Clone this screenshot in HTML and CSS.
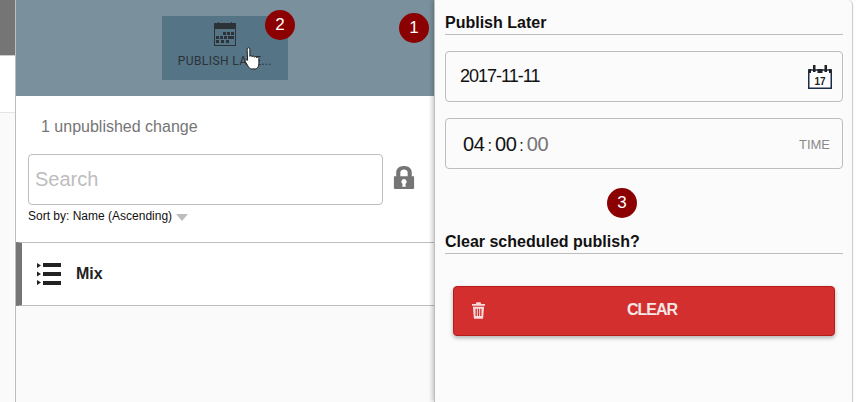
FILE: index.html
```html
<!DOCTYPE html>
<html lang="en">
<head>
  <meta charset="UTF-8">
  <title>Publish Later</title>
  <link rel="stylesheet" href="styles.css">
</head>
<body>

  <div class="page">
    <div class="gutter">
      <div class="gutter-top"></div>
      <div class="gutter-white"></div>
      <div class="gutter-rest"></div>
    </div>

    <div class="main">
      <div class="toolbar">
        <div class="toolbar-btn">
          <svg class="toolbar-icon" width="24" height="24" viewBox="0 0 24 24">
            <path fill="#2b3238" d="M1 1h4v-1h1v1h12v-1h1v1h4v23h-22zM2 7v16h20v-16z"/>
            <g fill="#2b3238">
              <rect x="10" y="10" width="3" height="3"/><rect x="14" y="10" width="3" height="3"/><rect x="18" y="10" width="3" height="3"/>
              <rect x="3" y="14" width="3" height="3"/><rect x="7" y="14" width="3" height="3"/><rect x="11" y="14" width="3" height="3"/><rect x="15" y="14" width="3" height="3"/><rect x="18" y="14" width="3" height="3"/>
              <rect x="3" y="18" width="3" height="3"/><rect x="8" y="18" width="3" height="3"/><rect x="13" y="18" width="3" height="3"/>
            </g>
          </svg>
          <span class="toolbar-label">PUBLISH LATE...</span>
          <svg class="cursor" width="18" height="24" viewBox="0 0 20 26">
            <path fill="#fff" stroke="#111" stroke-width="1" d="M3.500 2c0-2 3-2 3 0v8c0-1 2.500-1 2.500 .5 0-1 2.500-1 2.500 .5 0-1 2.500-1 2.500 .5 0-1 2.500-.5 2.500 1v6c0 3-2 5.500-4 5.500h-4c-2 0-3-1.500-4-3l-3-5c-1-1.500 1-3 2.500-1.500z"/>
          </svg>
        </div>
        <span class="badge badge-two">2</span>
        <span class="badge badge-one">1</span>
      </div>

      <div class="content">
        <div class="changes">1 unpublished change</div>
        <div class="search-row">
          <input class="search" type="text" placeholder="Search">
          <svg class="lock" width="22" height="24" viewBox="0 0 24 26">
            <path fill="#757575" fill-rule="evenodd" d="M3.500 11v-4c0-9.500 17-9.500 17 0v4h2.500v13c0 1-1 1-1 1h-20s-1 0-1-1v-13zM8 11h8v-4c0-4.500-8-4.500-8 0zM12 14a3 3 0 0 0-1.500 5.500l-.5 3h4l-.5-3a3 3 0 0 0-1.500-5.500z"/>
          </svg>
        </div>
        <div class="sort">Sort by: Name (Ascending) <span class="sort-arrow"></span></div>
      </div>

      <div class="item">
        <svg width="24" height="22" viewBox="0 0 24 22">
          <path fill="#222" d="M0 0l4 2.500-4 2.500zM0 8.500l4 2.500-4 2.500zM0 17l4 2.500-4 2.500zM6 0h18v4h-18zM6 9h18v4h-18zM6 18h18v4h-18z"/>
        </svg>
        <span class="item-name">Mix</span>
      </div>
      <div class="main-rest"></div>
    </div>

    <div class="panel">
      <h3 class="panel-title">Publish Later</h3>
      <div class="field field-date">
        <span>2017-11-11</span>
        <svg width="24" height="24" viewBox="0 0 24 24">
          <path fill="#fff" stroke="#1c2b4a" stroke-width="1.500" d="M.75 5h22.500v18.250h-22.500z"/>
          <path fill="#222" d="M1 4h2v4h-2zM5 0h2.500v7h-2.500zM9.500 4h5v4h-5zM16.500 0h2.500v7h-2.500zM21 4h2v4h-2z"/>
          <text class="cal-day" x="12" y="20" text-anchor="middle">17</text>
        </svg>
      </div>
      <div class="field field-time">
        <span class="time"><b>04</b><i>:</i><b>00</b><i>:</i><b class="dim">00</b></span>
        <span class="time-label">TIME</span>
      </div>
      <span class="badge badge-three">3</span>
      <h3 class="panel-title panel-title-clear">Clear scheduled publish?</h3>
      <button class="clear-btn" type="button">
        <svg class="trash" width="13" height="17" viewBox="0 0 14 18">
          <path fill="#f6dcdc" fill-rule="evenodd" d="M5 0h4l1 2h4v2h-14v-2h4zM1 5h12l-1 12c0 .5-.5 1-1 1h-8c-.5 0-1-.5-1-1zM3.800 7v8h1.400v-8zM6.300 7v8h1.400v-8zM8.800 7v8h1.400v-8z"/>
        </svg>
        <span>CLEAR</span>
      </button>
    </div>
  </div>

</body>
</html>
```

FILE: styles.css
```css
* {
  box-sizing: border-box;
}

body {
  margin: 0;
  font-family: "Liberation Sans", Arial, sans-serif;
  background: #fff;
}

.page {
  display: flex;
  width: 856px;
  height: 402px;
  overflow: hidden;
}

.gutter {
  width: 15px;
  display: flex;
  flex-direction: column;
}

.gutter-top {
  height: 56px;
  background: #757575;
  border-bottom: 1px solid #ccc;
}

.gutter-white {
  height: 57px;
  background: #fff;
  border-bottom: 1px solid #e5e5e5;
}

.gutter-rest {
  flex: 1;
  background: #fafafa;
}

.main {
  width: 419px;
  display: flex;
  flex-direction: column;
  border-left: 1px solid #bdbdbd;
  background: #fff;
}

.toolbar {
  position: relative;
  height: 96px;
  padding: 16px 0 0 146px;
  background: #7a919d;
}

.toolbar-btn {
  position: relative;
  width: 126px;
  height: 64px;
  padding-top: 6px;
  display: flex;
  flex-direction: column;
  align-items: center;
  background: #557486;
}

.toolbar-label {
  margin-top: 8px;
  font-family: Roboto, sans-serif;
  font-size: 12px;
  letter-spacing: .4px;
  color: #2b3238;
}

.cursor {
  position: absolute;
  left: 82px;
  top: 31px;
}

.badge {
  display: flex;
  align-items: center;
  justify-content: center;
  width: 30px;
  height: 30px;
  border-radius: 50%;
  background: #8b0000;
  color: #fff;
  font-size: 17px;
}

.badge-one {
  position: absolute;
  left: 383px;
  top: 13px;
}

.badge-two {
  position: absolute;
  left: 249px;
  top: 10px;
}

.badge-three {
  position: absolute;
  left: 172px;
  top: 188px;
}

.content {
  height: 146px;
  padding: 22px 12px 0;
}

.changes {
  padding-left: 13px;
  font-size: 16px;
  color: #757575;
}

.search-row {
  display: flex;
  align-items: center;
  margin-top: 18px;
}

.search {
  width: 355px;
  height: 51px;
  padding: 0 6px;
  font-family: "Liberation Sans", Arial, sans-serif;
  font-size: 20px;
  border: 1px solid #bdbdbd;
  border-radius: 4px;
  outline: none;
}

.search::placeholder {
  color: #bdbdbd;
  opacity: 1;
}

.lock {
  margin-left: 10px;
  margin-bottom: 3px;
}

.sort {
  margin-top: 4px;
  font-size: 12px;
  color: #111;
}

.sort-arrow {
  display: inline-block;
  margin-left: 1px;
  border-top: 7px solid #bdbdbd;
  border-left: 6.5px solid transparent;
  border-right: 6.5px solid transparent;
  vertical-align: -1px;
}

.item {
  height: 64px;
  display: flex;
  align-items: center;
  gap: 15px;
  padding-left: 15px;
  background: #fff;
  border-top: 1px solid #bdbdbd;
  border-bottom: 1px solid #bdbdbd;
  border-left: 6px solid #757575;
}

.item-name {
  font-size: 16px;
  font-weight: bold;
  color: #222;
}

.main-rest {
  flex: 1;
  background: #fafafa;
}

.panel {
  position: relative;
  width: 419px;
  height: 402px;
  padding: 13px 9px 0 10px;
  background: #fbfbfb;
  border-left: 1px solid #bdbdbd;
  border-right: 1px solid #ccc;
  border-radius: 0 5px 0 0;
  box-shadow: -2px 0 4px rgba(0,0,0,0.2);
}

.panel-title {
  margin: 0;
  padding-bottom: 2px;
  font-size: 16px;
  line-height: 19px;
  color: #111;
  border-bottom: 1px solid #bdbdbd;
}

.panel-title-clear {
  margin-top: 63px;
}

.field {
  display: flex;
  align-items: center;
  justify-content: space-between;
  height: 51px;
  margin-top: 16px;
  background: #fbfbfb;
  border: 1px solid #bdbdbd;
  border-radius: 4px;
}

.field-date {
  padding: 0 10px 0 14px;
  font-size: 18px;
  letter-spacing: -1px;
  color: #111;
}

.cal-day {
  font-family: "Liberation Sans", Arial, sans-serif;
  font-size: 10px;
  font-weight: bold;
  letter-spacing: 0;
  fill: #222;
}

.field-time {
  padding: 2px 12px 0 17px;
}

.time {
  font-size: 20px;
  color: #111;
}

.time b {
  font-weight: normal;
  letter-spacing: -.4px;
}

.time i {
  margin: 0 3px;
  font-style: normal;
  font-size: 16px;
}

.time .dim {
  color: #757575;
}

.time-label {
  font-size: 13px;
  color: #8a8a8a;
}

.clear-btn {
  position: relative;
  display: flex;
  align-items: center;
  justify-content: center;
  width: 382px;
  height: 50px;
  margin: 32px 0 0 8px;
  padding: 0 0 2px 16px;
  font-family: "Liberation Sans", Arial, sans-serif;
  font-size: 16px;
  font-weight: bold;
  letter-spacing: -1px;
  color: #f6e6e6;
  background: #d32f2f;
  border: 1px solid #b71c1c;
  border-radius: 4px;
  box-shadow: 0 2px 4px rgba(0,0,0,0.3);
}

.trash {
  position: absolute;
  left: 18px;
  top: 15px;
}
```
